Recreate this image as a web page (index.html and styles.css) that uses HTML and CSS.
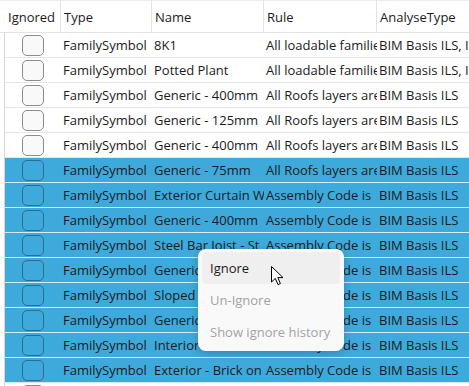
FILE: index.html
```html
<!DOCTYPE html>
<html>
<head>
<meta charset="UTF-8">
<title>Ignored elements</title>
<link rel="stylesheet" href="styles.css">
</head>
<body>
<div class="grid">
	<div class="head">
		<div class="hc c1">Ignored</div>
		<div class="hc c2">Type</div>
		<div class="hc c3">Name</div>
		<div class="hc c4">Rule</div>
		<div class="hc c5">AnalyseType</div>
	</div>
	<div class="rows">
		<div class="row"><div class="c1"><span class="chk"></span></div><div class="c2">FamilySymbol</div><div class="c3">8K1</div><div class="c4">All loadable families</div><div class="c5">BIM Basis ILS, IFC</div></div>
		<div class="row"><div class="c1"><span class="chk"></span></div><div class="c2">FamilySymbol</div><div class="c3">Potted Plant</div><div class="c4">All loadable families</div><div class="c5">BIM Basis ILS, IFC</div></div>
		<div class="row"><div class="c1"><span class="chk"></span></div><div class="c2">FamilySymbol</div><div class="c3">Generic - 400mm</div><div class="c4">All Roofs layers are</div><div class="c5">BIM Basis ILS</div></div>
		<div class="row"><div class="c1"><span class="chk"></span></div><div class="c2">FamilySymbol</div><div class="c3">Generic - 125mm</div><div class="c4">All Roofs layers are</div><div class="c5">BIM Basis ILS</div></div>
		<div class="row"><div class="c1"><span class="chk"></span></div><div class="c2">FamilySymbol</div><div class="c3">Generic - 400mm</div><div class="c4">All Roofs layers are</div><div class="c5">BIM Basis ILS</div></div>
		<div class="row sel"><div class="c1"><span class="chk"></span></div><div class="c2">FamilySymbol</div><div class="c3">Generic - 75mm</div><div class="c4">All Roofs layers are</div><div class="c5">BIM Basis ILS</div></div>
		<div class="row sel"><div class="c1"><span class="chk"></span></div><div class="c2">FamilySymbol</div><div class="c3">Exterior Curtain Wall</div><div class="c4">Assembly Code is</div><div class="c5">BIM Basis ILS</div></div>
		<div class="row sel"><div class="c1"><span class="chk"></span></div><div class="c2">FamilySymbol</div><div class="c3">Generic - 400mm</div><div class="c4">Assembly Code is</div><div class="c5">BIM Basis ILS</div></div>
		<div class="row sel"><div class="c1"><span class="chk"></span></div><div class="c2">FamilySymbol</div><div class="c3">Steel Bar Joist - St</div><div class="c4">Assembly Code is</div><div class="c5">BIM Basis ILS</div></div>
		<div class="row sel"><div class="c1"><span class="chk"></span></div><div class="c2">FamilySymbol</div><div class="c3">Generic - 300mm</div><div class="c4">Assembly Code is</div><div class="c5">BIM Basis ILS</div></div>
		<div class="row sel"><div class="c1"><span class="chk"></span></div><div class="c2">FamilySymbol</div><div class="c3">Sloped Glazing</div><div class="c4">Assembly Code is</div><div class="c5">BIM Basis ILS</div></div>
		<div class="row sel"><div class="c1"><span class="chk"></span></div><div class="c2">FamilySymbol</div><div class="c3">Generic - 200mm</div><div class="c4">Assembly Code is</div><div class="c5">BIM Basis ILS</div></div>
		<div class="row sel"><div class="c1"><span class="chk"></span></div><div class="c2">FamilySymbol</div><div class="c3">Interior - Partition</div><div class="c4">Assembly Code is</div><div class="c5">BIM Basis ILS</div></div>
		<div class="row sel"><div class="c1"><span class="chk"></span></div><div class="c2">FamilySymbol</div><div class="c3">Exterior - Brick on</div><div class="c4">Assembly Code is</div><div class="c5">BIM Basis ILS</div></div>
		<div class="row"><div class="c1"><span class="chk"></span></div><div class="c2">FamilySymbol</div><div class="c3">Generic - 150mm</div><div class="c4">Assembly Code is</div><div class="c5">BIM Basis ILS</div></div>
	</div>
</div>
<ul class="menu">
	<li class="hover">Ignore</li>
	<li class="off">Un-Ignore</li>
	<li class="off">Show ignore history</li>
</ul>
<svg class="cursor" width="13" height="20" viewBox="0 0 13 20">
	<path d="M0.5 0.5 L0.5 16 L4.3 12.4 L7 18.6 L9.4 17.5 L6.8 11.6 L12 11.6 Z" fill="#fff" stroke="#000" stroke-width="1" stroke-linejoin="round"/>
</svg>
</body>
</html>
```
FILE: styles.css
```css
*{margin:0;padding:0;box-sizing:border-box;}
html,body{width:469px;height:386px;overflow:hidden;}
body{background:#fff;color:#1b1b1b;font-family:"Open Sans","Noto Sans",sans-serif;font-size:13px;}
li{list-style-type:none;}
.grid{width:469px;}
.head{display:flex;height:33px;border-top:1px solid #ececec;border-bottom:1px solid #e3e3e3;}
.head .hc{display:flex;align-items:center;padding-left:3px;border-right:1px solid #e3e3e3;white-space:nowrap;overflow:hidden;color:#1b1b1b;}
.head .c1{padding-left:8px;}
.head .c5{border-right:0;}
.c1{width:61px;flex:none;}
.c2{width:91px;flex:none;}
.c3{width:112px;flex:none;}
.c4{width:113px;flex:none;}
.c5{flex:1;}
.rows{margin-left:4px;border-left:1px solid #d6d6d6;}
.row{display:flex;height:25px;border-bottom:1px solid #e6e6e6;}
.row > div{display:flex;align-items:center;padding-left:2px;white-space:nowrap;overflow:hidden;}
.row .c1{width:56px;justify-content:center;padding-left:0;}
.row.sel{background:#3eaadc;border-bottom-color:#d3ecf8;}
.chk{display:block;width:22px;height:21px;border:1px solid #8c8c8c;border-radius:5px;background:#f9f9f9;}
.sel .chk{background:transparent;border-color:#2b6c94;}
.menu{position:absolute;left:198px;top:249px;width:146px;padding:3px 4px;background:#f9f9f9;border-radius:8px;box-shadow:0 2px 8px rgba(0,0,0,0.22);}
.menu li{height:32px;line-height:32px;padding-left:8px;border-radius:4px;white-space:nowrap;}
.menu li.hover{background:#efefef;color:#1b1b1b;}
.menu li.off{color:#a3a3a3;}
.cursor{position:absolute;left:271px;top:266px;}
```
